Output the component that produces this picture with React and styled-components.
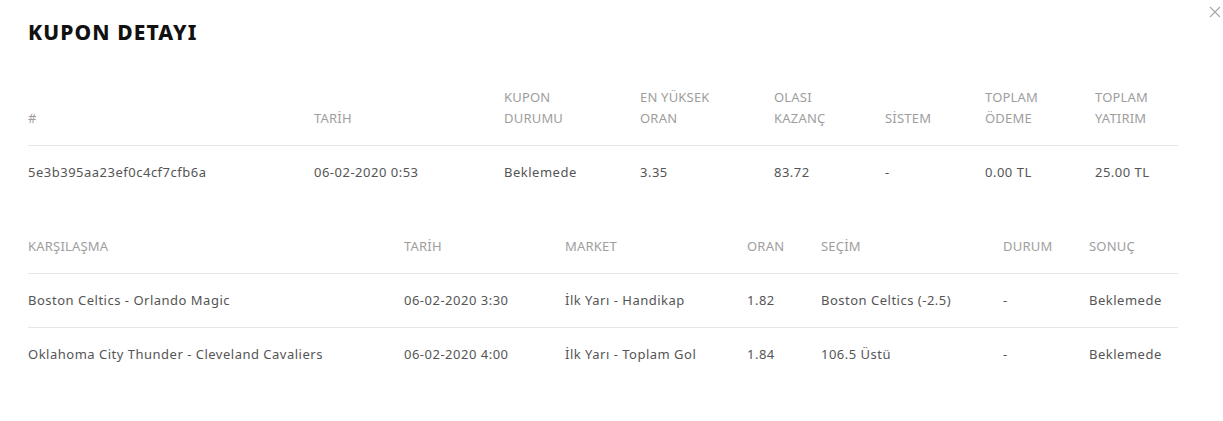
import React from "react";
import styled, { createGlobalStyle } from "styled-components";

const GlobalStyle = createGlobalStyle`
  body {
    margin: 0;
    background: #fff;
    font-family: "Noto Sans", "Open Sans", sans-serif;
  }
`;

const couponCols = [286, 190, 136, 134, 111, 100, 110, 83];
const couponHead = [
  ["#"],
  ["TARİH"],
  ["KUPON", "DURUMU"],
  ["EN YÜKSEK", "ORAN"],
  ["OLASI", "KAZANÇ"],
  ["SİSTEM"],
  ["TOPLAM", "ÖDEME"],
  ["TOPLAM", "YATIRIM"],
];
const couponRow = [
  "5e3b395aa23ef0c4cf7cfb6a",
  "06-02-2020 0:53",
  "Beklemede",
  "3.35",
  "83.72",
  "-",
  "0.00 TL",
  "25.00 TL",
];

const matchCols = [376, 161, 182, 74, 182, 86, 89];
const matchHead = ["KARŞILAŞMA", "TARİH", "MARKET", "ORAN", "SEÇİM", "DURUM", "SONUÇ"];
const matches = [
  ["Boston Celtics - Orlando Magic", "06-02-2020 3:30", "İlk Yarı - Handikap", "1.82", "Boston Celtics (-2.5)", "-", "Beklemede"],
  ["Oklahoma City Thunder - Cleveland Cavaliers", "06-02-2020 4:00", "İlk Yarı - Toplam Gol", "1.84", "106.5 Üstü", "-", "Beklemede"],
];

const App = () => {
  return (
    <Modal>
      <GlobalStyle />
      <Close aria-label="close">
        <svg width="12" height="12" viewBox="0 0 12 12">
          <path d="M1 1L11 11M11 1L1 11" stroke="#a8a8a8" strokeWidth="1.2" />
        </svg>
      </Close>
      <Title>KUPON DETAYI</Title>
      <Table>
        <colgroup>
          {couponCols.map((w, i) => (
            <col key={i} style={{ width: w }} />
          ))}
        </colgroup>
        <thead>
          <tr>
            {couponHead.map((lines, i) => (
              <Th key={i}>
                {lines.map((l, j) => (
                  <div key={j}>{l}</div>
                ))}
              </Th>
            ))}
          </tr>
        </thead>
        <tbody>
          <tr>
            {couponRow.map((v, i) => (
              <Td key={i} $last>
                {v}
              </Td>
            ))}
          </tr>
        </tbody>
      </Table>
      <Table $spaced>
        <colgroup>
          {matchCols.map((w, i) => (
            <col key={i} style={{ width: w }} />
          ))}
        </colgroup>
        <thead>
          <tr>
            {matchHead.map((h) => (
              <Th key={h}>{h}</Th>
            ))}
          </tr>
        </thead>
        <tbody>
          {matches.map((m, r) => (
            <tr key={r}>
              {m.map((v, i) => (
                <Td key={i} $last={r === matches.length - 1}>
                  {v}
                </Td>
              ))}
            </tr>
          ))}
        </tbody>
      </Table>
    </Modal>
  );
};

const Modal = styled.div`
  position: relative;
  padding: 19px 45px 40px 28px;
  width: 1150px;
`;

const Close = styled.button`
  position: absolute;
  top: 6px;
  right: 2px;
  border: 0;
  background: none;
  padding: 0;
  cursor: pointer;
  line-height: 0;
`;

const Title = styled.h2`
  margin: 0;
  font-size: 21px;
  line-height: 26px;
  font-weight: 800;
  letter-spacing: 1.1px;
  color: #111;
`;

const Table = styled.table`
  width: 1150px;
  border-collapse: collapse;
  table-layout: fixed;
  margin-top: ${(p) => (p.$spaced ? "20px" : "25px")};
`;

const Th = styled.th`
  text-align: left;
  vertical-align: bottom;
  font-weight: 400;
  font-size: 13px;
  line-height: 21px;
  letter-spacing: 0.2px;
  color: #9e9e9e;
  padding: 17px 0 16px;
  border-bottom: 1px solid #e6e6e6;
`;

const Td = styled.td`
  font-size: 13px;
  line-height: 21px;
  letter-spacing: 0.5px;
  color: #555;
  padding: 16px 0 16px;
  white-space: nowrap;
  border-bottom: ${(p) => (p.$last ? "0" : "1px solid #e6e6e6")};
`;

export default App;
